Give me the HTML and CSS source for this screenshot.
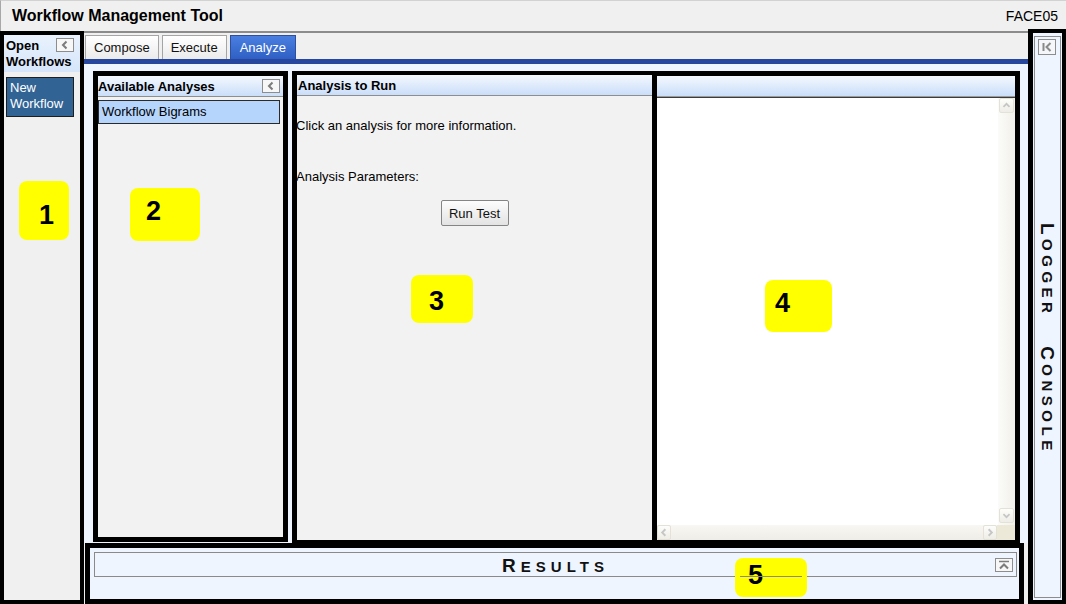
FILE: index.html
```html
<!DOCTYPE html>
<html>
<head>
<meta charset="utf-8">
<title>Workflow Management Tool</title>
<link rel="stylesheet" href="styles.css">
</head>
<body>
<header class="titlebar">
  <span class="app-title">Workflow Management Tool</span>
  <span class="user">FACE05</span>
</header>
<div class="workspace">
  <aside class="open-panel">
    <div class="open-head">
      <div class="open-row">
        <span>Open</span>
        <button class="mini-btn"><svg width="16" height="12" viewBox="0 0 16 12"><polyline points="9.5,2.5 6,6 9.5,9.5" fill="none" stroke="#7c7c7c" stroke-width="2"/></svg></button>
      </div>
      <div>Workflows</div>
    </div>
    <div class="wf-item">New<br>Workflow</div>
  </aside>

  <main class="main">
    <nav class="tabs">
      <div class="tab">Compose</div>
      <div class="tab">Execute</div>
      <div class="tab active">Analyze</div>
    </nav>
    <div class="tab-rule"></div>

    <div class="panels">
      <section class="panel p-avail">
        <div class="phead">
          <span>Available Analyses</span>
          <button class="mini-btn"><svg width="16" height="12" viewBox="0 0 16 12"><polyline points="9.5,2.5 6,6 9.5,9.5" fill="none" stroke="#7c7c7c" stroke-width="2"/></svg></button>
        </div>
        <div class="pbody">
          <div class="analysis-item">Workflow Bigrams</div>
        </div>
      </section>

      <section class="panel p-run">
        <div class="phead"><span>Analysis to Run</span></div>
        <div class="pbody run-body">
          <div class="info">Click an analysis for more information.</div>
          <div class="info params">Analysis Parameters:</div>
          <button class="run-btn">Run Test</button>
        </div>
      </section>

      <section class="panel p-output">
        <div class="phead"></div>
        <div class="out-body">
          <div class="out-main">
            <div class="out-content"></div>
            <div class="vscroll">
              <div class="sbtn"><svg width="15" height="15" viewBox="0 0 15 15"><polyline points="4,9 7.5,5.5 11,9" fill="none" stroke="#c6c6c6" stroke-width="2"/></svg></div>
              <div class="vtrack"></div>
              <div class="sbtn"><svg width="15" height="15" viewBox="0 0 15 15"><polyline points="4,6 7.5,9.5 11,6" fill="none" stroke="#c6c6c6" stroke-width="2"/></svg></div>
            </div>
          </div>
          <div class="hrow">
            <div class="hscroll">
              <div class="sbtn hbtn"><svg width="13" height="13" viewBox="0 0 13 13"><polyline points="8,3 4.5,6.5 8,10" fill="none" stroke="#c6c6c6" stroke-width="2"/></svg></div>
              <div class="htrack"></div>
              <div class="sbtn hbtn"><svg width="13" height="13" viewBox="0 0 13 13"><polyline points="5,3 8.5,6.5 5,10" fill="none" stroke="#c6c6c6" stroke-width="2"/></svg></div>
            </div>
            <div class="corner"></div>
          </div>
        </div>
      </section>
    </div>

    <section class="results">
      <div class="results-bar">
        <span></span>
        <span class="results-title"><span class="big">R</span>ESULTS</span>
        <button class="max-btn"><svg width="16" height="12" viewBox="0 0 16 12"><line x1="3" y1="2.5" x2="13" y2="2.5" stroke="#7c7c7c" stroke-width="1.5"/><polyline points="4,9.5 8,5.5 12,9.5" fill="none" stroke="#7c7c7c" stroke-width="2"/></svg></button>
      </div>
    </section>
  </main>

  <aside class="logger">
    <div class="logger-inner">
      <button class="logger-btn"><svg width="16" height="14" viewBox="0 0 16 14"><line x1="4.5" y1="3" x2="4.5" y2="11" stroke="#8a8a8a" stroke-width="2"/><polyline points="11.5,3 7.5,7 11.5,11" fill="none" stroke="#8a8a8a" stroke-width="2"/></svg></button>
      <div class="logger-title"><span class="big">L</span>OGGER <span class="big">C</span>ONSOLE</div>
    </div>
  </aside>
</div>

<div class="tag tag1">1</div>
<div class="tag tag2">2</div>
<div class="tag tag3">3</div>
<div class="tag tag4">4</div>
<div class="tag tag5">5</div>
</body>
</html>
```

FILE: styles.css
```css
* { box-sizing: border-box; }

html, body {
  margin: 0;
  padding: 0;
}

body {
  position: relative;
  width: 1066px;
  height: 604px;
  overflow: hidden;
  background: #f0f0f0;
  font-family: "Liberation Sans", Arial, sans-serif;
  font-size: 13px;
  color: #000;
}

button {
  font-family: inherit;
  padding: 0;
  cursor: default;
}

/* ---------- title bar ---------- */
.titlebar {
  height: 33px;
  border-top: 1px solid #d2d2d2;
  border-left: 1px solid #a8a8a8;
  border-bottom: 2px solid #8c8c8c;
  display: flex;
  align-items: center;
  justify-content: space-between;
  padding: 0 8px 0 11px;
  background: #f0f0f0;
}

.app-title {
  font-size: 16px;
  font-weight: bold;
}

.user {
  font-size: 14px;
}

/* ---------- workspace ---------- */
.workspace {
  display: flex;
  height: 571px;
}

/* ---------- left : open workflows ---------- */
.open-panel {
  width: 84px;
  margin-top: -2px;
  height: 573px;
  border: 4px solid #000;
  background: #f0f0f0;
  display: flex;
  flex-direction: column;
}

.open-head {
  height: 37px;
  padding: 3px 6px 0 2px;
  background: linear-gradient(#e9f2fd, #d6e5fa);
  font-weight: bold;
  font-size: 13px;
  line-height: 16px;
}

.open-row {
  display: flex;
  justify-content: space-between;
  align-items: flex-start;
}

.open-row .mini-btn {
  margin-top: 0;
  margin-right: 0;
}

.wf-item {
  margin: 5px 6px 0 2px;
  height: 40px;
  background: #316395;
  border: 1px solid #1e1e1e;
  color: #fff;
  font-size: 13px;
  line-height: 16px;
  padding: 2px 3px;
}

/* ---------- main column ---------- */
.main {
  width: 944px;
  display: flex;
  flex-direction: column;
}

.tabs {
  height: 26px;
  display: flex;
  align-items: flex-end;
  gap: 3px;
  padding-left: 1px;
  background: #f0f0f0;
}

.tab {
  height: 24px;
  padding: 0 8px;
  border: 1px solid #a5a5a5;
  border-bottom: none;
  background: linear-gradient(#ffffff, #ebebeb);
  font-size: 13px;
  line-height: 23px;
  color: #111;
}

.tab.active {
  padding: 0 9px;
  background: linear-gradient(#4a7fe0, #2f5fc4);
  border-color: #2d4f9e;
  color: #fff;
}

.tab-rule {
  height: 5px;
  background: #26479d;
}

.panels {
  height: 479px;
  display: flex;
  align-items: flex-start;
  padding: 7px 8px 0 9px;
  background: #eef5fe;
}

.panel {
  border: 5px solid #000;
  background: #f2f2f2;
  display: flex;
  flex-direction: column;
}

.p-avail {
  width: 195px;
  height: 471px;
  margin-right: 4px;
}

.p-run {
  width: 365px;
  height: 476px;
  border-top-width: 4px;
  border-bottom-width: 7px;
}

.p-output {
  width: 363px;
  height: 476px;
  border-left: none;
  border-bottom-width: 7px;
  background: #fff;
}

.phead {
  height: 21px;
  flex: none;
  border-bottom: 1px solid #8e8e8e;
  background: linear-gradient(#f4f8fe, #cadef9);
  display: flex;
  align-items: center;
  justify-content: space-between;
  font-weight: bold;
  font-size: 13px;
}

.p-run .phead {
  padding-left: 1px;
}

.mini-btn {
  width: 18px;
  height: 14px;
  margin-right: 3px;
  border: 1px solid #8d8d8d;
  background: #f7f7f7;
  display: flex;
  align-items: center;
  justify-content: center;
}

.pbody {
  flex: 1;
  display: flex;
  flex-direction: column;
}

.analysis-item {
  margin: 3px 3px 0 0;
  height: 24px;
  background: #b6d5fc;
  border: 1px solid #2a2a2a;
  padding-left: 3px;
  line-height: 22px;
  font-size: 13px;
}

.run-body {
  padding-top: 22px;
}

.info {
  font-size: 13px;
  line-height: 15px;
  margin-left: -1px;
}

.params {
  margin-top: 36px;
}

.run-btn {
  align-self: center;
  margin-top: 16px;
  width: 68px;
  height: 26px;
  border: 1px solid #858585;
  border-radius: 2px;
  background: linear-gradient(#fdfdfd, #e3e3e3);
  font-size: 13px;
  color: #111;
}

/* output + scrollbars */
.out-body {
  flex: 1;
  display: flex;
  flex-direction: column;
  border-top: 1px solid #3c3c3c;
}

.p-output .phead {
  border-bottom-color: #9a9a9a;
}

.out-main {
  flex: 1;
  display: flex;
}

.out-content {
  flex: 1;
  background: #fff;
}

.vscroll {
  width: 17px;
  display: flex;
  flex-direction: column;
  background: linear-gradient(90deg, #fbfbf9, #f1f0ea);
  padding: 0 1px 2px 1px;
}

.vtrack {
  flex: 1;
}

.sbtn {
  height: 15px;
  border: 1px solid #e4e2d7;
  border-radius: 2px;
  background: linear-gradient(#fdfdfb, #eeede6);
  display: flex;
  align-items: center;
  justify-content: center;
}

.hrow {
  height: 15px;
  display: flex;
}

.hscroll {
  flex: 1;
  display: flex;
  background: linear-gradient(#f8f7f3, #eeede7);
}

.hbtn {
  width: 14px;
  height: 15px;
}

.htrack {
  flex: 1;
}

.corner {
  width: 18px;
  background: #ece9d8;
}

/* ---------- results ---------- */
.results {
  margin-left: 1px;
  width: 939px;
  height: 61px;
  border: 5px solid #000;
  background: #eef5fe;
  padding: 4px 2px 0 4px;
  position: relative;
}

.results-bar {
  height: 25px;
  border: 1px solid #8a8a8a;
  display: grid;
  grid-template-columns: 1fr auto 1fr;
  align-items: center;
}

.results-title {
  font-size: 15px;
  font-weight: bold;
  letter-spacing: 5px;
  line-height: 1;
  color: #111;
  padding-top: 2px;
}

.big {
  font-size: 19px;
}

.max-btn {
  justify-self: end;
  margin-right: 3px;
  width: 18px;
  height: 14px;
  border: 1px solid #8d8d8d;
  background: #f7f7f7;
  display: flex;
  align-items: center;
  justify-content: center;
}

/* ---------- logger ---------- */
.logger {
  width: 38px;
  margin-top: -4px;
  height: 575px;
  border: 4px solid #000;
  border-left-width: 5px;
  background: #eef5fe;
  display: flex;
}

.logger-inner {
  flex: 1;
  margin: 3px 1px 2px 1px;
  border: 1px solid #8c8c8c;
  display: flex;
  flex-direction: column;
  align-items: center;
}

.logger-btn {
  align-self: flex-start;
  margin: 2px 0 0 3px;
  width: 18px;
  height: 16px;
  border: 1px solid #8d8d8d;
  background: #f4f6f9;
  display: flex;
  align-items: center;
  justify-content: center;
}

.logger-title {
  writing-mode: vertical-rl;
  margin-top: 168px;
  font-size: 15px;
  font-weight: bold;
  letter-spacing: 4.5px;
  word-spacing: 20px;
  line-height: 1;
  color: #111;
}

/* ---------- annotation tags ---------- */
.tag {
  position: absolute;
  background: #ffff00;
  border-radius: 8px;
  font-size: 27px;
  font-weight: bold;
  line-height: 27px;
  color: #000;
}

.tag1 { left: 19px; top: 181px; width: 50px; height: 59px; padding: 21px 0 0 20px; }
.tag2 { left: 130px; top: 188px; width: 70px; height: 53px; padding: 10px 0 0 16px; }
.tag3 { left: 411px; top: 275px; width: 62px; height: 48px; padding: 13px 0 0 18px; }
.tag4 { left: 765px; top: 280px; width: 67px; height: 52px; padding: 10px 0 0 10px; }
.tag5 { left: 735px; top: 558px; width: 72px; height: 39px; padding: 4px 0 0 13px; }

.tag5::after {
  content: "";
  position: absolute;
  left: 5px;
  right: 5px;
  top: 18px;
  height: 1px;
  background: #8a8a8a;
}
```
